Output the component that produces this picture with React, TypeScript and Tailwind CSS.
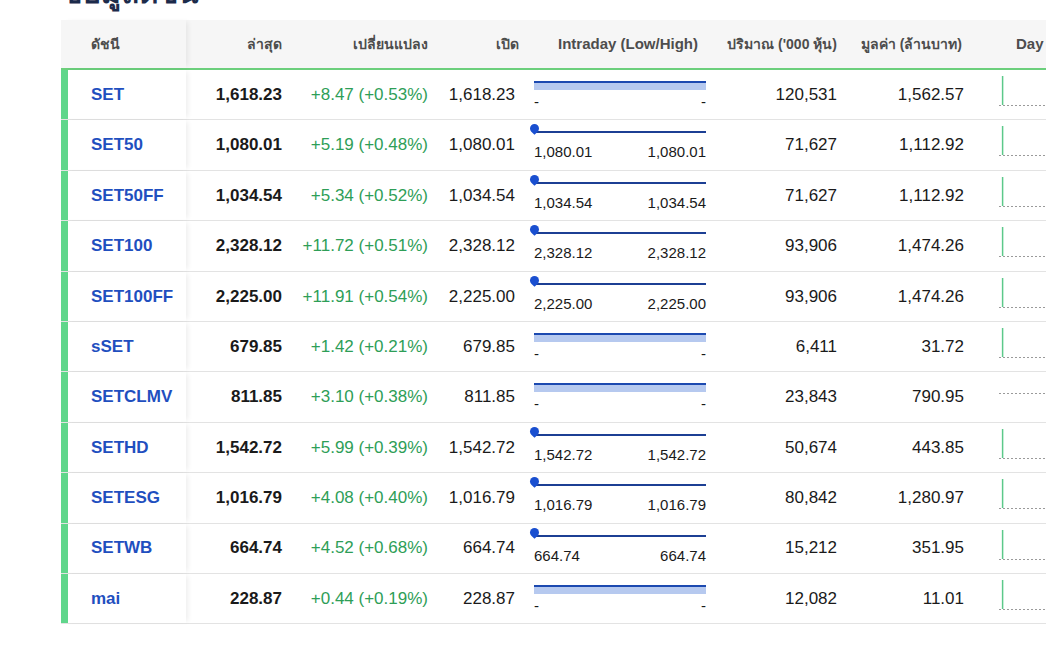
import React from "react";

type Row = {
  name: string;
  last: string;
  chg: string;
  open: string;
  kind: "bar" | "pin";
  vol: string;
  val: string;
  chart: boolean;
};

const rows: Row[] = [
  { name: "SET", last: "1,618.23", chg: "+8.47 (+0.53%)", open: "1,618.23", kind: "bar", vol: "120,531", val: "1,562.57", chart: true },
  { name: "SET50", last: "1,080.01", chg: "+5.19 (+0.48%)", open: "1,080.01", kind: "pin", vol: "71,627", val: "1,112.92", chart: true },
  { name: "SET50FF", last: "1,034.54", chg: "+5.34 (+0.52%)", open: "1,034.54", kind: "pin", vol: "71,627", val: "1,112.92", chart: true },
  { name: "SET100", last: "2,328.12", chg: "+11.72 (+0.51%)", open: "2,328.12", kind: "pin", vol: "93,906", val: "1,474.26", chart: true },
  { name: "SET100FF", last: "2,225.00", chg: "+11.91 (+0.54%)", open: "2,225.00", kind: "pin", vol: "93,906", val: "1,474.26", chart: true },
  { name: "sSET", last: "679.85", chg: "+1.42 (+0.21%)", open: "679.85", kind: "bar", vol: "6,411", val: "31.72", chart: true },
  { name: "SETCLMV", last: "811.85", chg: "+3.10 (+0.38%)", open: "811.85", kind: "bar", vol: "23,843", val: "790.95", chart: false },
  { name: "SETHD", last: "1,542.72", chg: "+5.99 (+0.39%)", open: "1,542.72", kind: "pin", vol: "50,674", val: "443.85", chart: true },
  { name: "SETESG", last: "1,016.79", chg: "+4.08 (+0.40%)", open: "1,016.79", kind: "pin", vol: "80,842", val: "1,280.97", chart: true },
  { name: "SETWB", last: "664.74", chg: "+4.52 (+0.68%)", open: "664.74", kind: "pin", vol: "15,212", val: "351.95", chart: true },
  { name: "mai", last: "228.87", chg: "+0.44 (+0.19%)", open: "228.87", kind: "bar", vol: "12,082", val: "11.01", chart: true },
];

function Intraday({ r }: { r: Row }) {
  const lo = r.kind === "pin" ? r.open : "-";
  return (
    <div className="w-[191px] h-full pl-[9px] pr-[10px] flex flex-col shrink-0">
      <div className="h-[23px] w-full">
        {r.kind === "bar" ? (
          <div className="mt-[11px]">
            <div className="h-[2px] bg-[#1c49b0]" />
            <div className="h-[7px] bg-[#b6c9ef]" />
          </div>
        ) : (
          <div className="mt-[11px] h-[2px] bg-[#1c3f94] relative">
            <div className="absolute left-[-4.5px] top-[-7px] w-[9px] h-[9px] bg-[#1a4fd0] rounded-full rounded-br-none rotate-45" />
          </div>
        )}
      </div>
      <div className="flex justify-between text-[15px] leading-[18px] text-[#1a1a1a]">
        <span>{lo}</span>
        <span>{lo}</span>
      </div>
    </div>
  );
}

function DayChart({ show }: { show: boolean }) {
  const y = show ? 35.5 : 21.5;
  return (
    <div className="flex-1 h-full pl-[25px]">
      <svg width="80" height="50" viewBox="0 0 80 50">
        {show && <line x1="3.6" y1="6" x2="3.6" y2="35" stroke="#5cc98a" strokeWidth="1.5" />}
        <line x1="0" y1={y} x2="80" y2={y} stroke="#9a9a9a" strokeWidth="1" strokeDasharray="2 2" />
      </svg>
    </div>
  );
}

export default function App() {
  return (
    <div className="w-[1046px] h-[660px] overflow-hidden bg-white font-['Liberation_Sans','Noto_Sans',sans-serif]">
      <div className="h-[20px] overflow-hidden pl-[62px]">
        <div className="mt-[-23px] text-[30px] leading-[32px] font-bold text-[#1c2b4b]">ข้อมูลดัชนี</div>
      </div>
      <div className="ml-[61px] w-[1100px]">
        <div className="flex items-center h-[50px] bg-[#f6f6f6] border-b-2 border-[#6ccf7c] text-[14px] font-semibold text-[#4d4d4d]">
          <div className="w-[125px] h-full flex items-center pl-[30px] shrink-0 relative z-10 bg-[#f6f6f6] shadow-[4px_0_5px_-2px_rgba(0,0,0,0.07)]">ดัชนี</div>
          <div className="w-[106px] pr-[10px] text-right shrink-0">ล่าสุด</div>
          <div className="w-[146px] pr-[10px] text-right shrink-0">เปลี่ยนแปลง</div>
          <div className="w-[87px] pr-[6px] text-right shrink-0">เปิด</div>
          <div className="w-[191px] pr-[18px] text-right shrink-0 text-[15px]">Intraday (Low/High)</div>
          <div className="w-[131px] pr-[10px] text-right shrink-0">ปริมาณ ('000 หุ้น)</div>
          <div className="w-[127px] pr-[12px] text-right shrink-0">มูลค่า (ล้านบาท)</div>
          <div className="flex-1 pl-[42px] text-[15px]">Day Chart</div>
        </div>
        {rows.map((r) => (
          <div key={r.name} className="flex items-center h-[50.4px] border-b border-[#e3e3e3] text-[17px] text-[#1a1a1a]">
            <div className="w-[125px] h-full flex items-center border-l-[7px] border-[#5fd68b] pl-[23px] shrink-0 relative z-10 bg-white shadow-[4px_0_5px_-2px_rgba(0,0,0,0.07)] font-bold text-[#1f4fbf]">
              {r.name}
            </div>
            <div className="w-[106px] pr-[10px] text-right font-bold shrink-0">{r.last}</div>
            <div className="w-[146px] pr-[10px] text-right text-[#2e9e57] shrink-0">{r.chg}</div>
            <div className="w-[87px] pr-[10px] text-right shrink-0">{r.open}</div>
            <Intraday r={r} />
            <div className="w-[131px] pr-[10px] text-right shrink-0">{r.vol}</div>
            <div className="w-[127px] pr-[10px] text-right shrink-0">{r.val}</div>
            <DayChart show={r.chart} />
          </div>
        ))}
      </div>
    </div>
  );
}
